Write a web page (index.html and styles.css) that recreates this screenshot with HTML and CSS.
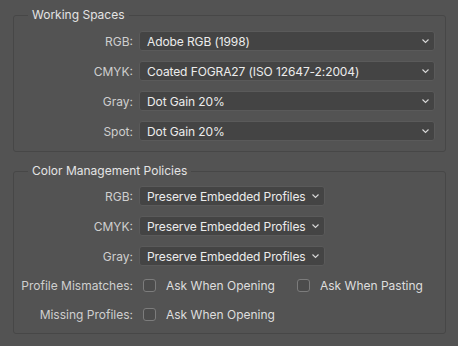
FILE: index.html
```html
<!DOCTYPE html>
<html lang="en">
<head>
  <meta charset="UTF-8" />
  <title>Color Settings</title>
  <link rel="stylesheet" href="styles.css">
</head>
<body>

  <!-- Working Spaces -->
  <fieldset class="group">
    <legend>Working Spaces</legend>
    <div class="rows">
      <label class="lbl">RGB:</label>
      <div class="dropdown wide"><span>Adobe RGB (1998)</span><svg class="chev" viewBox="0 0 7 4"><path d="M0.5 0.5l3 3 3-3"/></svg></div>

      <label class="lbl">CMYK:</label>
      <div class="dropdown wide"><span>Coated FOGRA27 (ISO 12647-2:2004)</span><svg class="chev" viewBox="0 0 7 4"><path d="M0.5 0.5l3 3 3-3"/></svg></div>

      <label class="lbl">Gray:</label>
      <div class="dropdown wide"><span>Dot Gain 20%</span><svg class="chev" viewBox="0 0 7 4"><path d="M0.5 0.5l3 3 3-3"/></svg></div>

      <label class="lbl">Spot:</label>
      <div class="dropdown wide"><span>Dot Gain 20%</span><svg class="chev" viewBox="0 0 7 4"><path d="M0.5 0.5l3 3 3-3"/></svg></div>
    </div>
  </fieldset>

  <!-- Color Management Policies -->
  <fieldset class="group policies">
    <legend>Color Management Policies</legend>
    <div class="rows">
      <label class="lbl">RGB:</label>
      <div class="dropdown"><span>Preserve Embedded Profiles</span><svg class="chev" viewBox="0 0 7 4"><path d="M0.5 0.5l3 3 3-3"/></svg></div>

      <label class="lbl">CMYK:</label>
      <div class="dropdown"><span>Preserve Embedded Profiles</span><svg class="chev" viewBox="0 0 7 4"><path d="M0.5 0.5l3 3 3-3"/></svg></div>

      <label class="lbl">Gray:</label>
      <div class="dropdown"><span>Preserve Embedded Profiles</span><svg class="chev" viewBox="0 0 7 4"><path d="M0.5 0.5l3 3 3-3"/></svg></div>

      <label class="lbl">Profile Mismatches:</label>
      <div class="checks">
        <span class="check opening"><i class="box"></i>Ask When Opening</span>
        <span class="check"><i class="box"></i>Ask When Pasting</span>
      </div>

      <label class="lbl">Missing Profiles:</label>
      <div class="checks">
        <span class="check opening"><i class="box"></i>Ask When Opening</span>
      </div>
    </div>
  </fieldset>

</body>
</html>
```

FILE: styles.css
```css
*, *::before, *::after {
  box-sizing: border-box;
}

html, body {
  margin: 0;
  padding: 0;
  width: 100%;
  height: 100%;
  background: #535353;
  overflow: hidden;
}

body {
  padding: 8px 12px 0 13px;
  font-family: Inter, "Noto Sans", sans-serif;
  font-size: 12px;
  color: #e2e2e2;
}

.group {
  margin: 0 0 12px;
  padding: 9px 0 10px;
  border: 1px solid #474747;
  border-radius: 3px;
  min-width: 0;
}

.group.policies {
  padding: 8px 0 9px;
}

.group legend {
  margin-left: 14px;
  padding: 0 4px;
  line-height: 14px;
  color: #e4e4e4;
}

.rows {
  display: grid;
  grid-template-columns: 119px 1fr;
  grid-auto-rows: 20px;
  column-gap: 6px;
  row-gap: 10px;
  align-items: center;
}

.policies .rows {
  grid-template-rows: 20px 20px 20px 19px 19px;
}

.lbl {
  text-align: right;
  color: #cfcfcf;
  white-space: nowrap;
}

.dropdown {
  display: flex;
  align-items: center;
  justify-content: space-between;
  height: 20px;
  width: 186px;
  padding: 0 5px 0 7px;
  background: #444444;
  border: 1px solid #5a5a5a;
  border-radius: 3px;
  color: #ececec;
  white-space: nowrap;
  letter-spacing: -0.1px;
}

.dropdown.wide {
  width: 296px;
}

.chev {
  flex-shrink: 0;
  width: 7px;
  height: 4px;
  fill: none;
  stroke: #d8d8d8;
  stroke-width: 1.1;
  overflow: visible;
}

.checks {
  display: flex;
  align-items: center;
  height: 19px;
  color: #dedede;
}

.check {
  display: flex;
  align-items: center;
  white-space: nowrap;
}

.check.opening {
  width: 154px;
}

.box {
  width: 13px;
  height: 13px;
  margin: 0 10px 0 4px;
  border: 1px solid #7c7c7c;
  border-radius: 3px;
  background: #4c4c4c;
}
```
